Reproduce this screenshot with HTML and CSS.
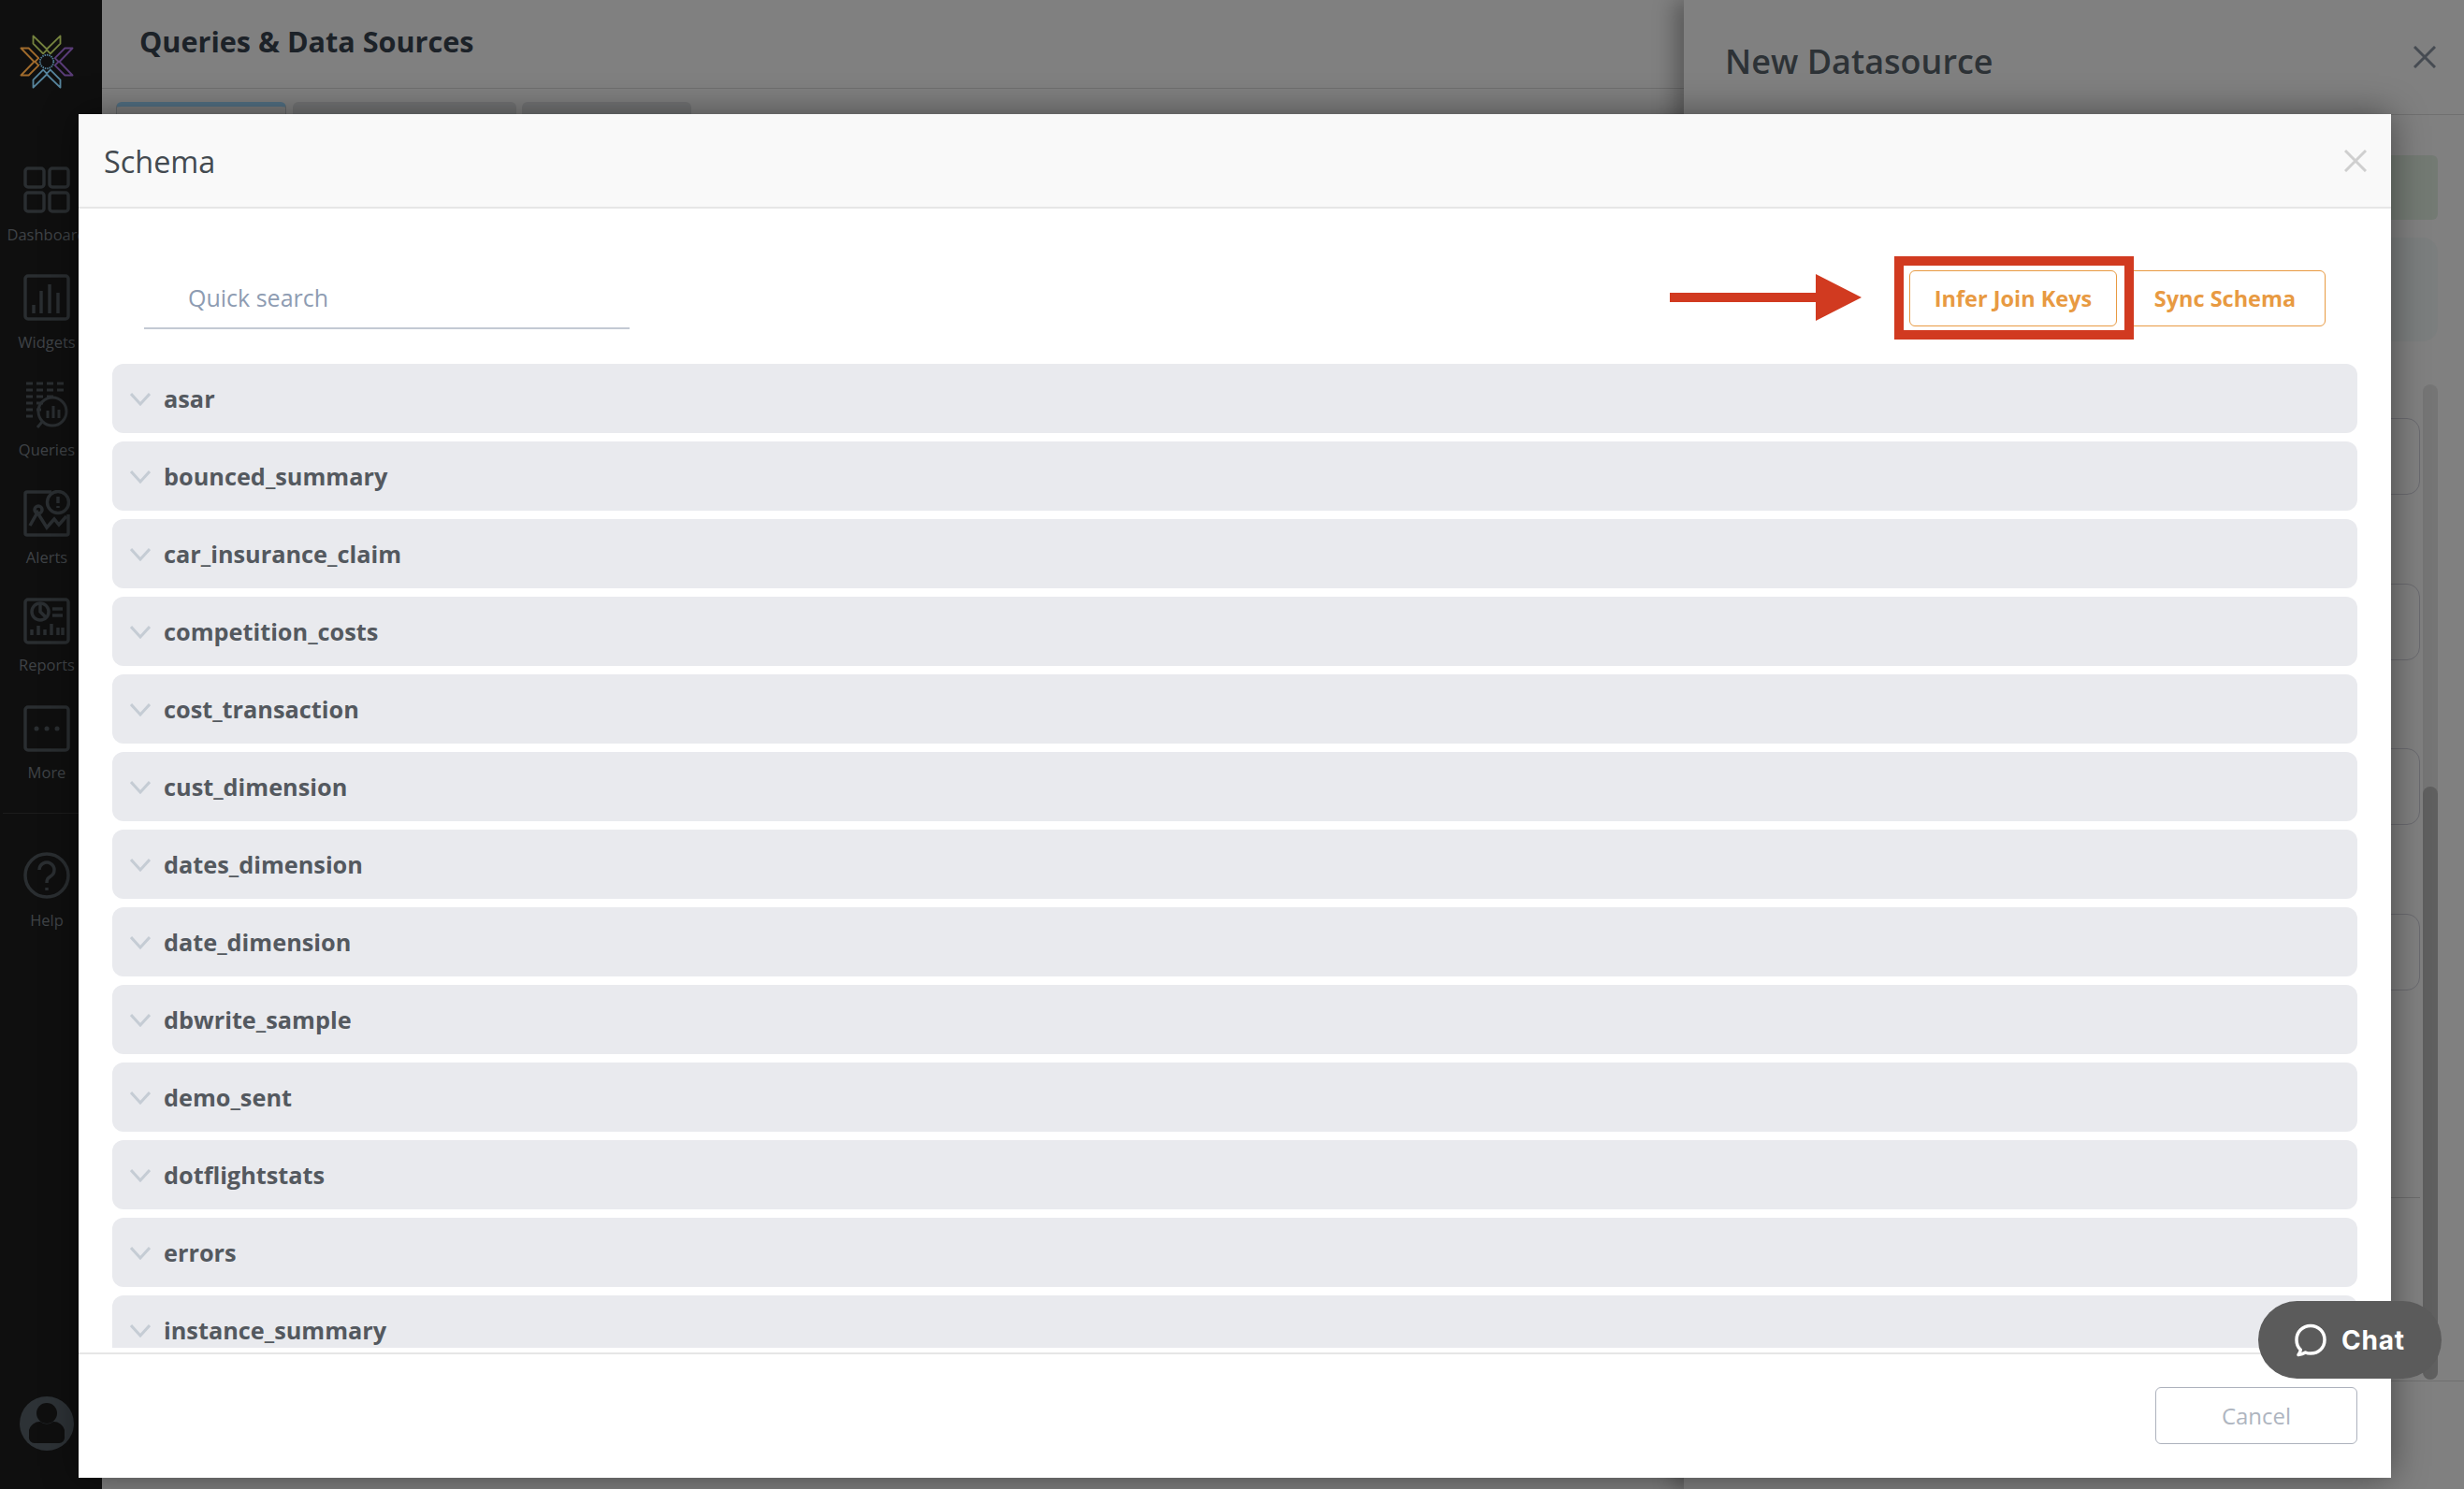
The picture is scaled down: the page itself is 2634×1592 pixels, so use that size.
FILE: index.html
```html
<!DOCTYPE html>
<html lang="en">
<head>
    <meta charset="UTF-8">
    <title>Queries &amp; Data Sources</title>
    <link rel="stylesheet" href="styles.css">
</head>
<body>
    <div class="app">
        <nav class="sidebar">
            <svg class="logo" viewBox="0 0 60 60" fill="none" stroke-width="1.900" stroke-linejoin="round">
                <path d="M15 1.500 L15 10 L26 21 L30 17 L34 21 L45 10 L45 1.500 L30 16 Z" stroke="#74823e"/>
                <path d="M58.500 15 L50 15 L39 26 L43 30 L39 34 L50 45 L58.500 45 L44 30 Z" stroke="#5a3c78"/>
                <path d="M15 58.500 L15 50 L26 39 L30 43 L34 39 L45 50 L45 58.500 L30 44 Z" stroke="#56849c"/>
                <path d="M1.500 15 L10 15 L21 26 L17 30 L21 34 L10 45 L1.500 45 L16 30 Z" stroke="#a06b2c"/>
                <circle cx="30" cy="30" r="7.500" stroke="#56849c" stroke-dasharray="1.500 1"/>
            </svg>
            <a class="nav-item">
                <svg class="nav-icon" viewBox="0 0 50 50"><rect x="2" y="2" width="20" height="20" rx="3"/><rect x="28" y="2" width="20" height="20" rx="3"/><rect x="2" y="28" width="20" height="20" rx="3"/><rect x="28" y="28" width="20" height="20" rx="3"/></svg>
                <span>Dashboard</span>
            </a>
            <a class="nav-item">
                <svg class="nav-icon" viewBox="0 0 50 50"><rect x="2" y="2" width="46" height="46" rx="3"/><path d="M11 42V33M19 42V18M28 42V11M37 42V20"/></svg>
                <span>Widgets</span>
            </a>
            <a class="nav-item">
                <svg class="nav-icon" viewBox="0 0 50 50"><path stroke-width="3" d="M3 2h7M14 2h7M25 2h7M36 2h7M3 9h7M14 9h7M25 9h7M36 9h7M3 16h7M14 16h7M25 16h7M3 23h7M14 23h7M3 30h7M14 30h5M3 37h7"/><circle cx="31" cy="32" r="15" stroke-width="3"/><path stroke-width="3" d="M20 43l-5 6M26 39v-8M32 39V26M38 39v-9"/></svg>
                <span>Queries</span>
            </a>
            <a class="nav-item">
                <svg class="nav-icon" viewBox="0 0 50 50"><path d="M30 2H4a2 2 0 0 0-2 2v42a2 2 0 0 0 2 2h42a2 2 0 0 0 2-2V26"/><circle cx="37" cy="13" r="11.500"/><path d="M37 7v7M37 17v2"/><circle cx="16" cy="21" r="4"/><path d="M7 38l8-14 10 16 8-9 5 6 8-9"/></svg>
                <span>Alerts</span>
            </a>
            <a class="nav-item">
                <svg class="nav-icon" viewBox="0 0 50 50"><rect x="2" y="2" width="46" height="46" rx="3"/><circle cx="18" cy="15" r="9"/><path d="M18 6v9l6 6M31 12h11M31 19h11M9 40v-6M16 40v-10M23 40v-6M30 40V28M37 40V32M42 40v-8"/></svg>
                <span>Reports</span>
            </a>
            <a class="nav-item">
                <svg class="nav-icon" viewBox="0 0 50 50"><rect x="2" y="2" width="46" height="46" rx="3"/><path stroke-width="5" stroke-linecap="round" d="M14 25h.1M25 25h.1M36 25h.1"/></svg>
                <span>More</span>
            </a>
            <div class="nav-divider"></div>
            <a class="nav-item">
                <svg class="nav-icon" viewBox="0 0 50 50"><circle cx="25" cy="25" r="23"/><path d="M17 19a8 8 0 1 1 12 7c-3 2-4 3-4 7M25 38v3"/></svg>
                <span>Help</span>
            </a>
            <svg class="avatar" viewBox="0 0 58 58">
                <circle cx="29" cy="29" r="29" fill="#2d3236"/>
                <circle cx="29" cy="18" r="11" fill="#0f0f0f"/>
                <path d="M10 36a12 12 0 0 1 12-9q7 5 14 0a12 12 0 0 1 12 9v7a6 6 0 0 1-6 7H16a6 6 0 0 1-6-7z" fill="#0f0f0f"/>
            </svg>
        </nav>

        <main class="main">
            <header class="main-header">
                <h1>Queries &amp; Data Sources</h1>
            </header>
            <div class="tabs">
                <div class="tab tab-active"></div>
                <div class="tab tab-wide"></div>
                <div class="tab tab-last"></div>
            </div>
        </main>

        <aside class="panel">
            <header class="panel-header">
                <h2>New Datasource</h2>
                <svg class="close-icon" viewBox="0 0 24 24"><path d="M1 1l22 22M23 1L1 23"/></svg>
            </header>
            <div class="panel-body">
                <div class="panel-alert"></div>
                <div class="panel-card"></div>
                <div class="panel-fields">
                    <div class="panel-field"></div>
                    <div class="panel-field"></div>
                    <div class="panel-field"></div>
                    <div class="panel-field"></div>
                </div>
                <div class="panel-line"></div>
            </div>
            <div class="panel-foot"></div>
            <div class="scroll-track"><div class="scroll-thumb"></div></div>
        </aside>
    </div>

    <div class="modal">
        <header class="modal-header">
            <h3>Schema</h3>
            <svg class="close-icon close-light" viewBox="0 0 24 24"><path d="M1 1l22 22M23 1L1 23"/></svg>
        </header>
        <div class="toolbar">
            <input class="search" type="text" placeholder="Quick search">
            <div class="toolbar-buttons">
                <button class="btn-outline btn-infer">Infer Join Keys</button>
                <button class="btn-outline btn-sync">Sync Schema</button>
            </div>
        </div>
        <div class="schema-list">
            <div class="schema-row"><svg class="chevron" viewBox="0 0 22 14"><path d="M1 1l10 11L21 1"/></svg>asar</div>
            <div class="schema-row"><svg class="chevron" viewBox="0 0 22 14"><path d="M1 1l10 11L21 1"/></svg>bounced_summary</div>
            <div class="schema-row"><svg class="chevron" viewBox="0 0 22 14"><path d="M1 1l10 11L21 1"/></svg>car_insurance_claim</div>
            <div class="schema-row"><svg class="chevron" viewBox="0 0 22 14"><path d="M1 1l10 11L21 1"/></svg>competition_costs</div>
            <div class="schema-row"><svg class="chevron" viewBox="0 0 22 14"><path d="M1 1l10 11L21 1"/></svg>cost_transaction</div>
            <div class="schema-row"><svg class="chevron" viewBox="0 0 22 14"><path d="M1 1l10 11L21 1"/></svg>cust_dimension</div>
            <div class="schema-row"><svg class="chevron" viewBox="0 0 22 14"><path d="M1 1l10 11L21 1"/></svg>dates_dimension</div>
            <div class="schema-row"><svg class="chevron" viewBox="0 0 22 14"><path d="M1 1l10 11L21 1"/></svg>date_dimension</div>
            <div class="schema-row"><svg class="chevron" viewBox="0 0 22 14"><path d="M1 1l10 11L21 1"/></svg>dbwrite_sample</div>
            <div class="schema-row"><svg class="chevron" viewBox="0 0 22 14"><path d="M1 1l10 11L21 1"/></svg>demo_sent</div>
            <div class="schema-row"><svg class="chevron" viewBox="0 0 22 14"><path d="M1 1l10 11L21 1"/></svg>dotflightstats</div>
            <div class="schema-row"><svg class="chevron" viewBox="0 0 22 14"><path d="M1 1l10 11L21 1"/></svg>errors</div>
            <div class="schema-row"><svg class="chevron" viewBox="0 0 22 14"><path d="M1 1l10 11L21 1"/></svg>instance_summary</div>
        </div>
        <footer class="modal-footer">
            <button class="btn-cancel">Cancel</button>
        </footer>

        <!-- annotation drawn over the modal -->
        <div class="callout-box"></div>
        <svg class="callout-arrow" viewBox="0 0 205 50"><path d="M0 20h156V0l49 25-49 25V30H0z"/></svg>
    </div>

    <div class="chat">
        <svg class="chat-icon" viewBox="0 0 36 36"><path d="M18 2.500c8.500 0 15 6.500 15 15s-6.500 14.500-15 14.500c-2 0-4-.3-5.500-1-2.500 1.500-5 2.200-7.500 2.500 1.500-2 2.200-3.500 2.300-5.500C4.300 25.500 3 22 3 17.500 3 9 9.500 2.500 18 2.500z"/></svg>
        Chat
    </div>
</body>
</html>
```

FILE: styles.css
```css
* {
    box-sizing: border-box;
}
html, body {
    margin: 0;
    height: 100%;
    overflow: hidden;
}
body {
    font-family: "Open Sans", sans-serif;
    background-color: #808080;
    position: relative;
}
h1, h2, h3 {
    margin: 0;
}
.app {
    display: flex;
    height: 1592px;
}

/* sidebar */
.sidebar {
    width: 109px;
    flex-shrink: 0;
    background: #0f0f0f;
    padding-top: 37px;
    display: flex;
    flex-direction: column;
    overflow: hidden;
}
.logo {
    width: 58px;
    height: 58px;
    margin: 0 0 83px 21px;
    flex-shrink: 0;
}
.nav-item {
    width: 100px;
    height: 115.200px;
    flex-shrink: 0;
    display: flex;
    flex-direction: column;
    align-items: center;
    font-size: 16.500px;
    line-height: 22px;
    color: #3f4347;
}
.nav-item span {
    margin-top: 11.500px;
}
.nav-icon {
    width: 50px;
    height: 50px;
    flex-shrink: 0;
    fill: none;
    stroke: #2a2e31;
    stroke-width: 3.500;
}
.nav-divider {
    height: 1px;
    background: #1c1c1c;
    margin: 0 0 41px 3px;
    flex-shrink: 0;
}
.avatar {
    width: 58px;
    height: 58px;
    margin: 467px 0 0 21px;
    flex-shrink: 0;
}

/* page behind the dialog */
.main {
    flex: 1;
}
.main-header {
    height: 95px;
    padding: 23px 0 0 40px;
    border-bottom: 1px solid #707070;
}
.main-header h1 {
    font-size: 30.600px;
    line-height: 42px;
    font-weight: 700;
    color: #1c2228;
}
.tabs {
    display: flex;
    gap: 7px;
    padding: 14px 0 0 15px;
}
.tab {
    height: 40px;
    border-radius: 6px 6px 0 0;
    background: #737475;
}
.tab-active {
    width: 182px;
    background: #7c7c7c;
    border: 1px solid #66696c;
    border-top: 5px solid #527083;
}
.tab-wide {
    width: 239px;
}
.tab-last {
    width: 181px;
    margin-left: -1px;
}

.panel {
    position: absolute;
    top: 0;
    right: 0;
    bottom: 0;
    width: 834px;
    background: #808080;
    box-shadow: -10px 0 22px rgba(0, 0, 0, 0.3);
}
.panel-header {
    height: 123px;
    padding: 0 30px 0 44px;
    border-bottom: 1px solid #707070;
    display: flex;
    align-items: center;
    justify-content: space-between;
}
.panel-header h2 {
    font-size: 36px;
    font-weight: 600;
    color: #2d3236;
    margin-top: 8px;
}
.close-icon {
    width: 24px;
    height: 24px;
    fill: none;
    stroke: #464b52;
    stroke-width: 3;
}
.close-light {
    stroke: #cfcfcf;
}
.panel-body {
    padding: 43px 28px 0 45px;
}
.panel-alert {
    height: 69px;
    border-radius: 6px;
    background: #737a73;
}
.panel-card {
    height: 111px;
    margin-top: 19px;
    border-radius: 16px;
    background: #7b7e7e;
}
.panel-fields {
    margin: 82px 19px 0 0;
    display: flex;
    flex-direction: column;
    gap: 94.500px;
}
.panel-field {
    height: 82px;
    border: 1px solid #6b6b70;
    border-radius: 14px;
}
.panel-line {
    height: 1px;
    background: #6c6c6c;
    margin: 221px 19px 0 0;
}
.panel-foot {
    height: 1px;
    background: #707070;
    margin-top: 195px;
}
.scroll-track {
    position: absolute;
    top: 411px;
    left: 790px;
    width: 16px;
    height: 1064px;
    border-radius: 8px;
    background: #757575;
}
.scroll-thumb {
    margin-top: 430px;
    height: 634px;
    border-radius: 8px;
    background: #5f5f5f;
}

/* schema dialog */
.modal {
    position: absolute;
    left: 84px;
    top: 122px;
    width: 2472px;
    height: 1458px;
    background: #ffffff;
    display: flex;
    flex-direction: column;
    box-shadow: 0 0 36px rgba(0, 0, 0, 0.45);
}
.modal-header {
    height: 101px;
    flex-shrink: 0;
    padding: 0 26px 0 27px;
    background: #f9f9f9;
    border-bottom: 2px solid #e6e6e6;
    display: flex;
    align-items: center;
    justify-content: space-between;
}
.modal-header h3 {
    font-size: 32.400px;
    font-weight: 400;
    color: #434a50;
    padding-top: 1px;
}
.toolbar {
    height: 166px;
    flex-shrink: 0;
    padding: 66px 70px 0 70px;
    display: flex;
    justify-content: space-between;
    align-items: flex-start;
}
.search {
    width: 519px;
    height: 63px;
    padding: 0 0 3px 47px;
    border: none;
    border-bottom: 2px solid #c3c9d3;
    outline: none;
    font-family: inherit;
    font-size: 25px;
}
.search::placeholder {
    color: #8e9cb2;
    opacity: 1;
}
.toolbar-buttons {
    display: flex;
    gap: 8px;
}
.btn-outline {
    height: 60px;
    background: #fff;
    border: 1px solid #e89a42;
    border-radius: 6px;
    font-family: inherit;
    font-size: 23.500px;
    font-weight: 700;
    color: #e89a42;
    padding: 0;
}
.btn-infer {
    width: 222px;
}
.btn-sync {
    width: 215px;
}
.schema-list {
    flex: 1;
    margin: 0 36px 5px;
    overflow: hidden;
    display: flex;
    flex-direction: column;
    gap: 9px;
}
.schema-row {
    height: 74px;
    flex-shrink: 0;
    padding-left: 19px;
    border-radius: 12px;
    background: #e9eaee;
    color: #54595f;
    font-size: 25.300px;
    font-weight: 700;
    display: flex;
    align-items: center;
    gap: 14px;
}
.chevron {
    width: 22px;
    height: 14px;
    margin-top: 2px;
    fill: none;
    stroke: #c5ccd4;
    stroke-width: 3;
}
.modal-footer {
    height: 134px;
    flex-shrink: 0;
    padding: 35px 36px 0 0;
    border-top: 2px solid #e6e6e6;
    display: flex;
    justify-content: flex-end;
    align-items: flex-start;
}
.btn-cancel {
    width: 216px;
    height: 61px;
    background: #fff;
    border: 1px solid #adb2bd;
    border-radius: 6px;
    font-family: inherit;
    font-size: 24px;
    color: #aeb5c0;
}
.callout-box {
    position: absolute;
    left: 1941px;
    top: 152px;
    width: 256px;
    height: 89px;
    border: 10px solid #d13a20;
}
.callout-arrow {
    position: absolute;
    left: 1701px;
    top: 171px;
    width: 205px;
    height: 50px;
    fill: #d13a20;
}

/* chat widget */
.chat {
    position: absolute;
    left: 2414px;
    top: 1391px;
    width: 196px;
    height: 83px;
    border-radius: 42px;
    background: #5b5b5b;
    color: #ffffff;
    font-family: Inter, sans-serif;
    font-size: 28px;
    font-weight: 700;
    letter-spacing: 0.800px;
    display: flex;
    align-items: center;
    padding-left: 38px;
    gap: 15px;
}
.chat-icon {
    width: 36px;
    height: 36px;
    fill: none;
    stroke: #ffffff;
    stroke-width: 3.500;
    stroke-linejoin: round;
}
```
